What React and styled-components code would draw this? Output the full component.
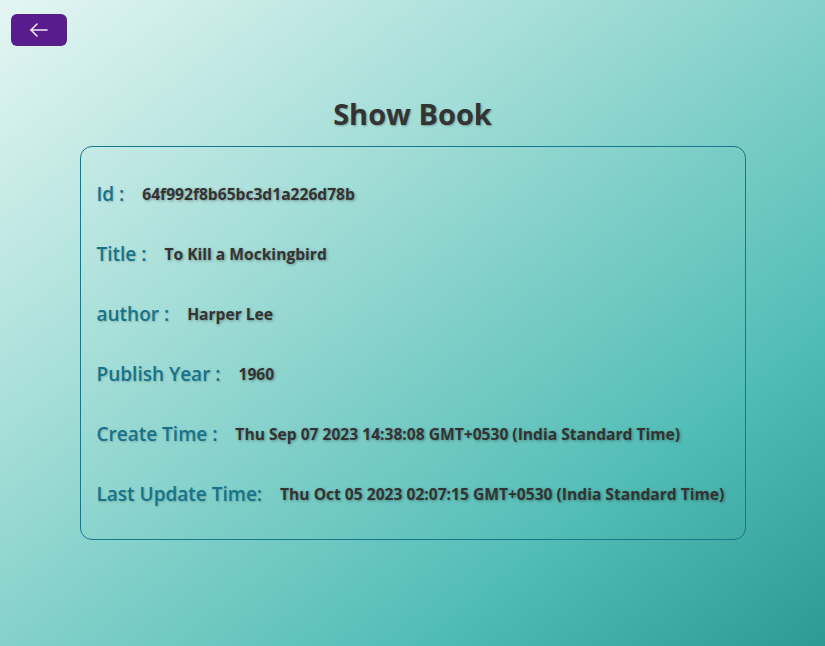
import React from 'react'
import styled, { createGlobalStyle } from 'styled-components'

const GlobalStyle = createGlobalStyle`
  html, body {
    margin: 0;
    padding: 0;
  }
  body {
    font-family: "Open Sans", "Noto Sans", sans-serif;
    min-height: 646px;
    background: linear-gradient(to bottom right, #e4f6f3 0%, #a3ddd7 35%, #52bdb6 75%, #2f9993 100%);
  }
`

const book = {
  _id: '64f992f8b65bc3d1a226d78b',
  title: 'To Kill a Mockingbird',
  author: 'Harper Lee',
  publishYear: 1960,
  createdAt: 'Thu Sep 07 2023 14:38:08 GMT+0530 (India Standard Time)',
  updatedAt: 'Thu Oct 05 2023 02:07:15 GMT+0530 (India Standard Time)',
}

const ShowBook = () => {
  const rows = [
    ['Id :', book._id],
    ['Title :', book.title],
    ['author :', book.author],
    ['Publish Year :', book.publishYear],
    ['Create Time :', book.createdAt],
    ['Last Update Time:', book.updatedAt],
  ]

  return (
    <Page>
      <GlobalStyle />
      <BackButton>
        <svg width="24" height="24" viewBox="0 0 24 24" fill="none" stroke="currentColor" strokeWidth="1.6" strokeLinecap="round" strokeLinejoin="round">
          <line x1="20" y1="12" x2="4" y2="12" />
          <polyline points="10 6 4 12 10 18" />
        </svg>
      </BackButton>
      <Title>Show Book</Title>
      <Card>
        {rows.map(([label, value]) => (
          <Row key={label}>
            <Label>{label}</Label>
            <Value>{value}</Value>
          </Row>
        ))}
      </Card>
    </Page>
  )
}

export default ShowBook

const Page = styled.div`
  padding: 14px 11px;
`
const BackButton = styled.button`
  width: 56px;
  height: 32px;
  border: none;
  border-radius: 6px;
  background: #591c8c;
  color: #f2eaf8;
  display: flex;
  align-items: center;
  justify-content: center;
  padding: 0;
  cursor: pointer;
`
const Title = styled.h1`
  margin: 48px 0 13px;
  text-align: center;
  font-size: 29px;
  font-weight: 700;
  color: #333;
  text-shadow: 1px 1px 2px rgba(0, 0, 0, 0.3);
`
const Card = styled.div`
  width: 666px;
  margin: 0 auto;
  box-sizing: border-box;
  border: 1px solid #17778b;
  border-radius: 12px;
  padding: 17px 16px 15px;
  display: flex;
  flex-direction: column;
`
const Row = styled.div`
  display: flex;
  align-items: center;
  gap: 18px;
  height: 60px;
`
const Label = styled.span`
  font-size: 19px;
  font-weight: 600;
  color: #16738a;
  text-shadow: 1px 1px 2px rgba(0, 0, 0, 0.2);
`
const Value = styled.span`
  font-size: 15.6px;
  font-weight: 700;
  color: #333;
  text-shadow: 1px 1px 3px rgba(0, 0, 0, 0.35);
`
